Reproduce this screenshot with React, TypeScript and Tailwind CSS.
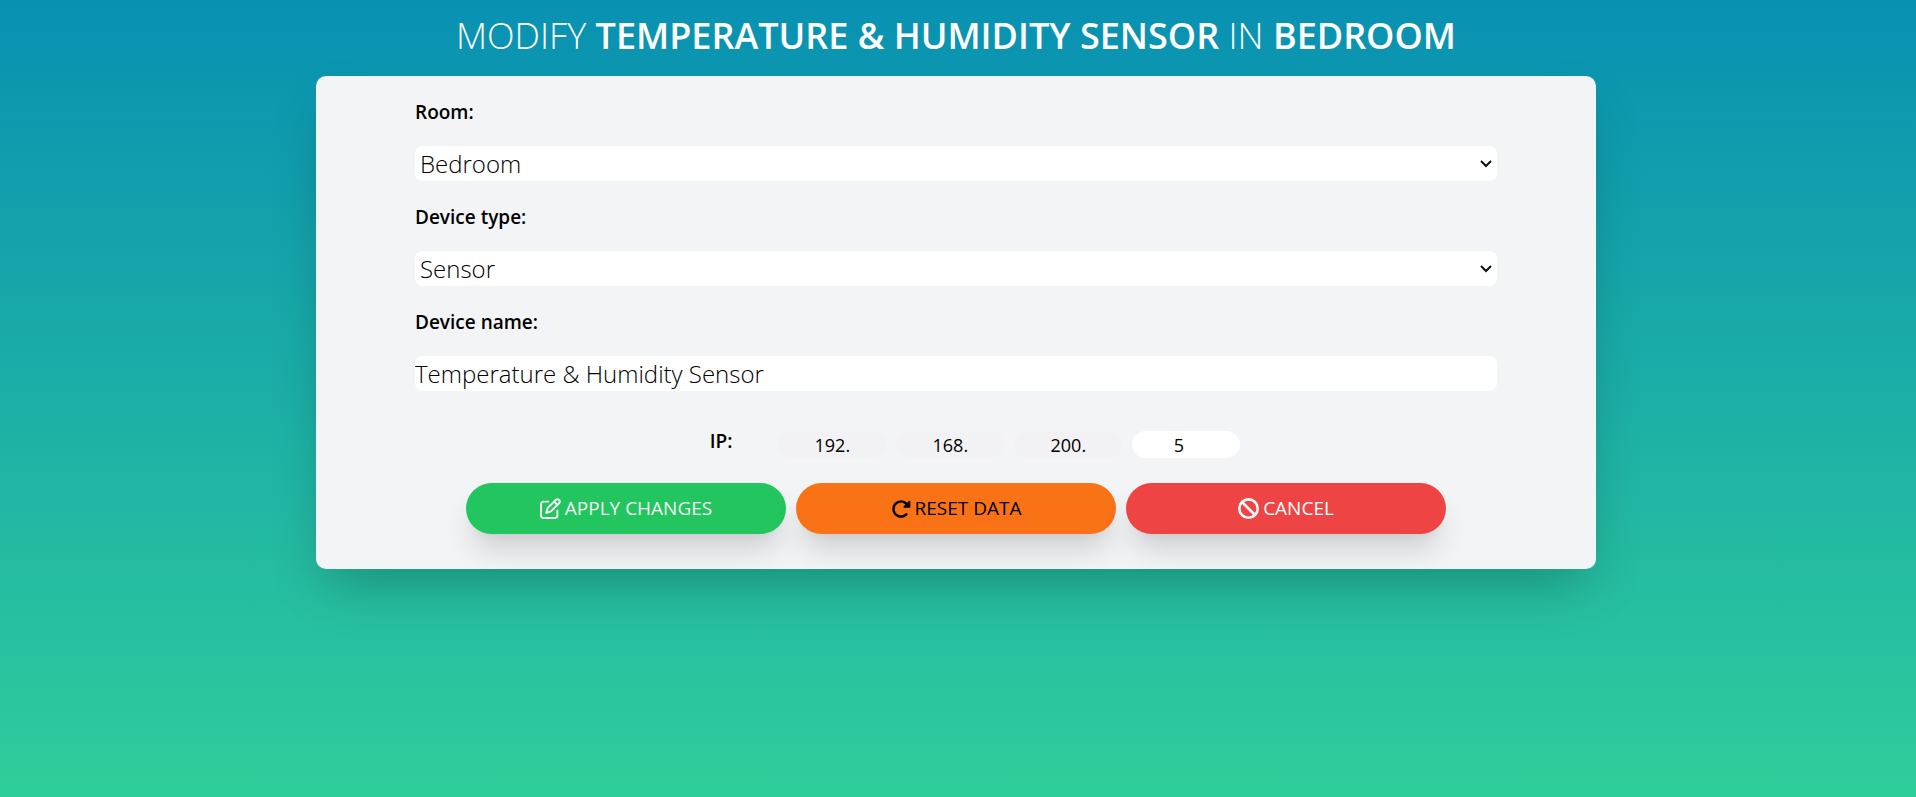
import { useState } from "react";
import type { ReactNode } from "react";
import { FaBan, FaRegPenToSquare, FaRotateRight } from "react-icons/fa6";

const rooms = ["Bedroom", "Kitchen", "Living room"];
const deviceTypes = ["Sensor", "Light", "Switch"];
const network = ["192.", "168.", "200."];

function Field({ id, label, children }: { id: string; label: string; children: ReactNode }) {
  return (
    <div className="flex flex-col gap-[18px]">
      <label htmlFor={id} className="text-[19px] leading-8 font-semibold">
        {label}
      </label>
      {children}
    </div>
  );
}

function Select({ id, options }: { id: string; options: string[] }) {
  return (
    <div className="relative">
      <select
        id={id}
        className="block h-[35px] w-full appearance-none rounded-lg bg-white pt-px pr-8 pl-[5px] text-2xl leading-[34px] font-light outline-none"
      >
        {options.map((option) => (
          <option key={option}>{option}</option>
        ))}
      </select>
      <svg
        viewBox="0 0 12 8"
        className="pointer-events-none absolute top-[14px] right-[5px] h-2 w-3"
        fill="none"
        stroke="#101010"
        strokeWidth="2"
        aria-hidden="true"
      >
        <path d="M1 1l5 5 5-5" />
      </svg>
    </div>
  );
}

function ActionButton({ className, children }: { className: string; children: ReactNode }) {
  return (
    <button
      type="button"
      className={`flex h-[51px] w-80 items-center justify-center gap-1 rounded-full text-[19px] shadow-[0_20px_30px_-5px_rgb(0_0_0/0.15),0_8px_10px_-6px_rgb(0_0_0/0.06)] ${className}`}
    >
      {children}
    </button>
  );
}

export default function App() {
  const [name, setName] = useState("Temperature & Humidity Sensor");
  const [host, setHost] = useState("5");

  return (
    <main className="flex min-h-screen flex-col items-center bg-linear-to-b/srgb from-[#0891b2] to-[#34d399] to-110% pr-5 pl-4 font-['Open_Sans',sans-serif] text-black">
      <h1 className="pt-[6px] pb-[10px] text-center text-4xl leading-[60px] font-light text-white uppercase">
        Modify <b className="font-semibold">Temperature &amp; Humidity Sensor</b> in <b className="font-semibold">Bedroom</b>
      </h1>
      <form className="w-full max-w-7xl rounded-[10px] bg-gray-100 pt-5 pb-[35px] shadow-2xl">
        <div className="mx-auto flex w-11/12 max-w-[1082px] flex-col gap-5">
          <Field id="room" label="Room:">
            <Select id="room" options={rooms} />
          </Field>
          <Field id="type" label="Device type:">
            <Select id="type" options={deviceTypes} />
          </Field>
          <Field id="name" label="Device name:">
            <input
              id="name"
              value={name}
              onChange={(e) => setName(e.target.value)}
              className="h-[35px] w-full rounded-lg bg-white text-2xl font-light outline-none"
            />
          </Field>
        </div>
        <div className="mt-10 flex items-start justify-center gap-[10px] pl-[38px]">
          <label htmlFor="host" className="mr-9 text-[19px] leading-5 font-semibold">
            IP:
          </label>
          {network.map((part) => (
            <input
              key={part}
              value={part}
              aria-label={`Network part ${part}`}
              disabled
              className="h-[27px] w-[108px] rounded-full bg-[#f2f2f4] pt-px text-center text-lg leading-6"
            />
          ))}
          <input
            id="host"
            type="number"
            value={host}
            onChange={(e) => setHost(e.target.value)}
            className="h-[27px] w-[108px] rounded-full bg-white pt-px text-center text-lg leading-6 outline-none"
          />
        </div>
        <div className="mt-[25px] flex flex-wrap justify-center gap-[10px]">
          <ActionButton className="bg-[#22c55e] text-gray-100">
            <FaRegPenToSquare className="size-[21px]" />
            APPLY CHANGES
          </ActionButton>
          <ActionButton className="bg-[#f97316] text-black">
            <FaRotateRight className="size-5" />
            RESET DATA
          </ActionButton>
          <ActionButton className="bg-[#ef4444] text-white">
            <FaBan className="size-[21px]" />
            CANCEL
          </ActionButton>
        </div>
      </form>
    </main>
  );
}
